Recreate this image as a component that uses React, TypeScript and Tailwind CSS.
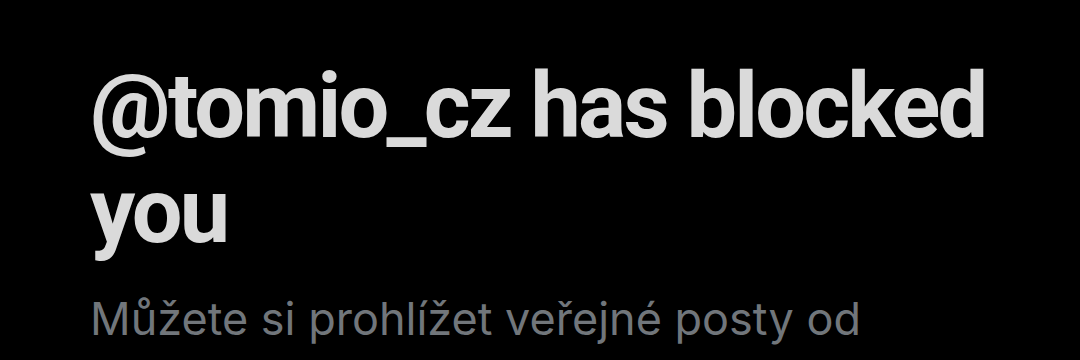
export default function App() {
  return (
    <div className="w-[1080px] h-[360px] bg-black overflow-hidden">
      <div className="px-[90px] pt-[54px]">
        <h1
          className="text-[90px] leading-[105px] font-bold text-[#dadada] tracking-[-2.8px]"
          style={{ fontFamily: 'Roboto, "Liberation Sans", sans-serif' }}
        >
          @tomio_cz has blocked you
        </h1>
        <p
          className="mt-[22px] text-[45px] leading-[66px] text-[#71767b]"
          style={{ fontFamily: 'Inter, "Noto Sans", sans-serif' }}
        >
          Můžete si prohlížet veřejné posty od @tomio_cz, ale nemůžete je sledovat.
        </p>
      </div>
    </div>
  )
}
